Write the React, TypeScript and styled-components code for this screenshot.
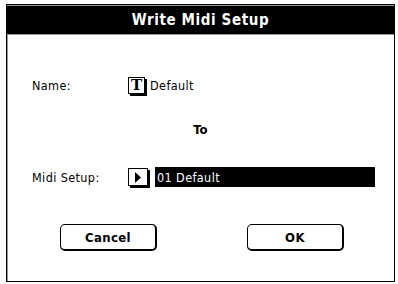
import React from "react";
import styled, { createGlobalStyle } from "styled-components";

const Global = createGlobalStyle`
  html, body { margin: 0; padding: 0; background: #fff; }
  body { font-family: "DejaVu Sans Condensed", "DejaVu Sans", sans-serif; color: #000; }
`;

const Dialog = styled.div`
  margin: 4px 0 0 6px;
  width: 389px;
  height: 278px;
  box-sizing: border-box;
  border: 1px solid #000;
  box-shadow: inset 1px 1px 0 #9a9a9a;
  display: flex;
  flex-direction: column;
`;

const TitleBar = styled.div`
  height: 28px;
  margin-top: 1px;
  background: #000;
  border-bottom: 1px solid #9a9a9a;
  color: #fff;
  display: flex;
  align-items: center;
  justify-content: center;
  font-weight: bold;
  font-size: 15px;
  letter-spacing: 0.6px;
`;

const Body = styled.div`
  flex: 1;
  display: flex;
  flex-direction: column;
  padding: 0 0 0 25px;
`;

const Row = styled.div<{ $top: number }>`
  display: flex;
  align-items: center;
  margin-top: ${(p) => p.$top}px;
  height: 20px;
`;

const Label = styled.div`
  width: 96px;
  font-size: 12.5px;
  letter-spacing: 0.4px;
`;

const IconBox = styled.div<{ $w: number; $h: number; $gap: number }>`
  width: ${(p) => p.$w}px;
  height: ${(p) => p.$h}px;
  box-sizing: border-box;
  border: 1px solid #000;
  box-shadow: 2px 2px 0 #000;
  display: flex;
  align-items: center;
  justify-content: center;
  margin-right: ${(p) => p.$gap}px;
  flex: none;
`;

const TGlyph = styled.span`
  font-family: "DejaVu Serif", "Liberation Serif", serif;
  font-weight: bold;
  font-size: 15px;
  line-height: 1;
`;

const Value = styled.div`
  font-size: 12.5px;
  letter-spacing: 0.4px;
`;

const ValueField = styled.div`
  width: 220px;
  height: 20px;
  background: #000;
  color: #fff;
  display: flex;
  align-items: center;
  padding-left: 2px;
  font-size: 12.5px;
  letter-spacing: 0.4px;
  box-sizing: border-box;
`;

const Center = styled.div`
  text-align: center;
  font-weight: bold;
  font-size: 13px;
  margin-top: 27px;
  padding-right: 25px;
`;

const Buttons = styled.div`
  display: flex;
  gap: 90px;
  margin-top: 37px;
  padding-left: 28px;
`;

const Button = styled.div`
  width: 97px;
  height: 27px;
  box-sizing: border-box;
  border: 1px solid #000;
  border-right-width: 2px;
  border-bottom-width: 2px;
  border-radius: 5px;
  display: flex;
  align-items: center;
  justify-content: center;
  font-weight: bold;
  font-size: 13px;
  letter-spacing: 0.4px;
`;

export default function App() {
  return (
    <>
      <Global />
      <Dialog>
        <TitleBar>Write Midi Setup</TitleBar>
        <Body>
          <Row $top={40}>
            <Label>Name:</Label>
            <IconBox $w={17} $h={17} $gap={5}>
              <TGlyph>T</TGlyph>
            </IconBox>
            <Value>Default</Value>
          </Row>
          <Center>To</Center>
          <Row $top={30}>
            <Label>Midi Setup:</Label>
            <IconBox $w={20} $h={18} $gap={7}>
              <svg width="8" height="11" viewBox="0 0 8 11">
                <path d="M1 0 L7 5.5 L1 11 Z" fill="#000" />
              </svg>
            </IconBox>
            <ValueField>01 Default</ValueField>
          </Row>
          <Buttons>
            <Button>Cancel</Button>
            <Button>OK</Button>
          </Buttons>
        </Body>
      </Dialog>
    </>
  );
}
